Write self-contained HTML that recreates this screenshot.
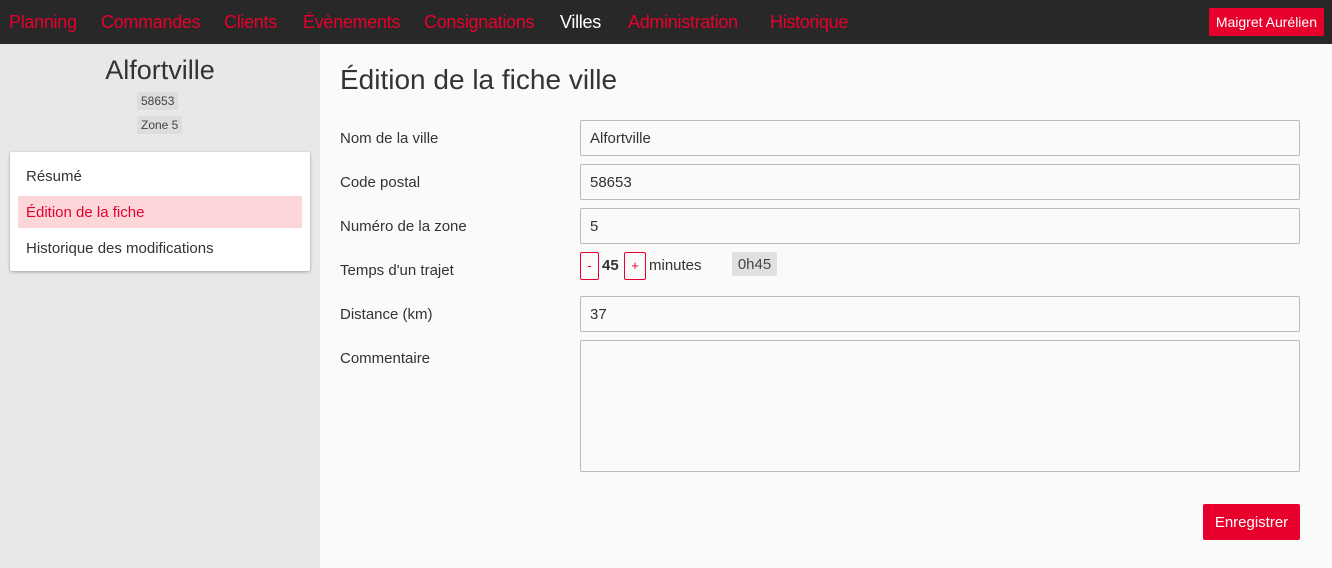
<!DOCTYPE html>
<html><head><meta charset="utf-8"><style>
*{box-sizing:border-box;margin:0;padding:0}
body{width:1332px;height:568px;overflow:hidden;font-family:"Liberation Sans",sans-serif;background:#fafafa;color:#333;position:relative}
.nav{position:absolute;left:0;top:0;width:1332px;height:44px;background:#282828}
.nav a{position:absolute;top:12px;font-size:18px;color:#e8002c;text-decoration:none;letter-spacing:-0.3px}
.user{position:absolute;right:8px;top:8px;height:28px;background:#e8002c;color:#fff;font-size:14px;line-height:28px;padding:0 7px;border-radius:2px}
.side{position:absolute;left:0;top:44px;width:320px;height:524px;background:#e8e8e8}
.side h2{position:absolute;left:0;width:320px;top:11px;text-align:center;font-weight:normal;font-size:27px;color:#333}
.tag{position:absolute;background:#ddd;font-size:12px;padding:2px 4px;color:#444}
.menu{position:absolute;left:10px;top:108px;width:300px;height:119px;background:#fff;border-radius:2px;box-shadow:0 1px 3px rgba(0,0,0,.3)}
.menu div{position:absolute;left:8px;width:284px;height:32px;line-height:34px;padding-left:8px;font-size:15px;color:#333}
h1{position:absolute;left:340px;top:64px;font-weight:normal;font-size:28px;color:#333}
.lbl{position:absolute;left:340px;font-size:15px;color:#333}
.inp{position:absolute;left:580px;width:720px;height:36px;border:1px solid #bbb;background:#fafafa;font-size:15px;line-height:36px;padding-left:9px;border-radius:2px}
.btn{position:absolute;border:1px solid #e8002c;color:#e8002c;font-size:13px;text-align:center;line-height:26px;border-radius:2px;width:19px;height:28px;top:252px}
</style></head><body>
<div class="nav">
<a style="left:9px">Planning</a><a style="left:101px">Commandes</a><a style="left:224px">Clients</a><a style="left:303px">Évènements</a><a style="left:424px">Consignations</a><a style="left:560px;color:#fff">Villes</a><a style="left:628px">Administration</a><a style="left:770px">Historique</a>
<div class="user">Maigret Aurélien</div>
</div>
<div class="side">
<h2>Alfortville</h2>
<div class="tag" style="left:137px;top:48px">58653</div>
<div class="tag" style="left:137px;top:72px">Zone 5</div>
<div class="menu">
<div style="top:8px">Résumé</div>
<div style="top:44px;background:#fdd6d9;color:#e8002c;border-radius:2px">Édition de la fiche</div>
<div style="top:80px">Historique des modifications</div>
</div>
</div>
<h1>Édition de la fiche ville</h1>
<div class="lbl" style="top:130px">Nom de la ville</div><div class="inp" style="top:120px">Alfortville</div>
<div class="lbl" style="top:174px">Code postal</div><div class="inp" style="top:164px">58653</div>
<div class="lbl" style="top:218px">Numéro de la zone</div><div class="inp" style="top:208px">5</div>
<div class="lbl" style="top:262px">Temps d'un trajet</div>
<div class="btn" style="left:580px">-</div>
<div style="position:absolute;left:602px;top:257px;font-size:15px;font-weight:bold">45</div>
<div class="btn" style="left:624px;width:22px">+</div>
<div style="position:absolute;left:649px;top:257px;font-size:15px">minutes</div>
<div style="position:absolute;left:732px;top:252px;height:24px;width:45px;background:#e0e0e0;font-size:15px;line-height:26px;text-align:center;color:#444;border-radius:2px">0h45</div>
<div class="lbl" style="top:306px">Distance (km)</div><div class="inp" style="top:296px">37</div>
<div class="lbl" style="top:350px">Commentaire</div><div class="inp" style="top:340px;height:132px"></div>
<div style="position:absolute;left:1203px;top:504px;width:97px;height:36px;background:#e8002c;color:#fff;font-size:15px;line-height:38px;text-align:center;border-radius:2px">Enregistrer</div>
</body></html>
